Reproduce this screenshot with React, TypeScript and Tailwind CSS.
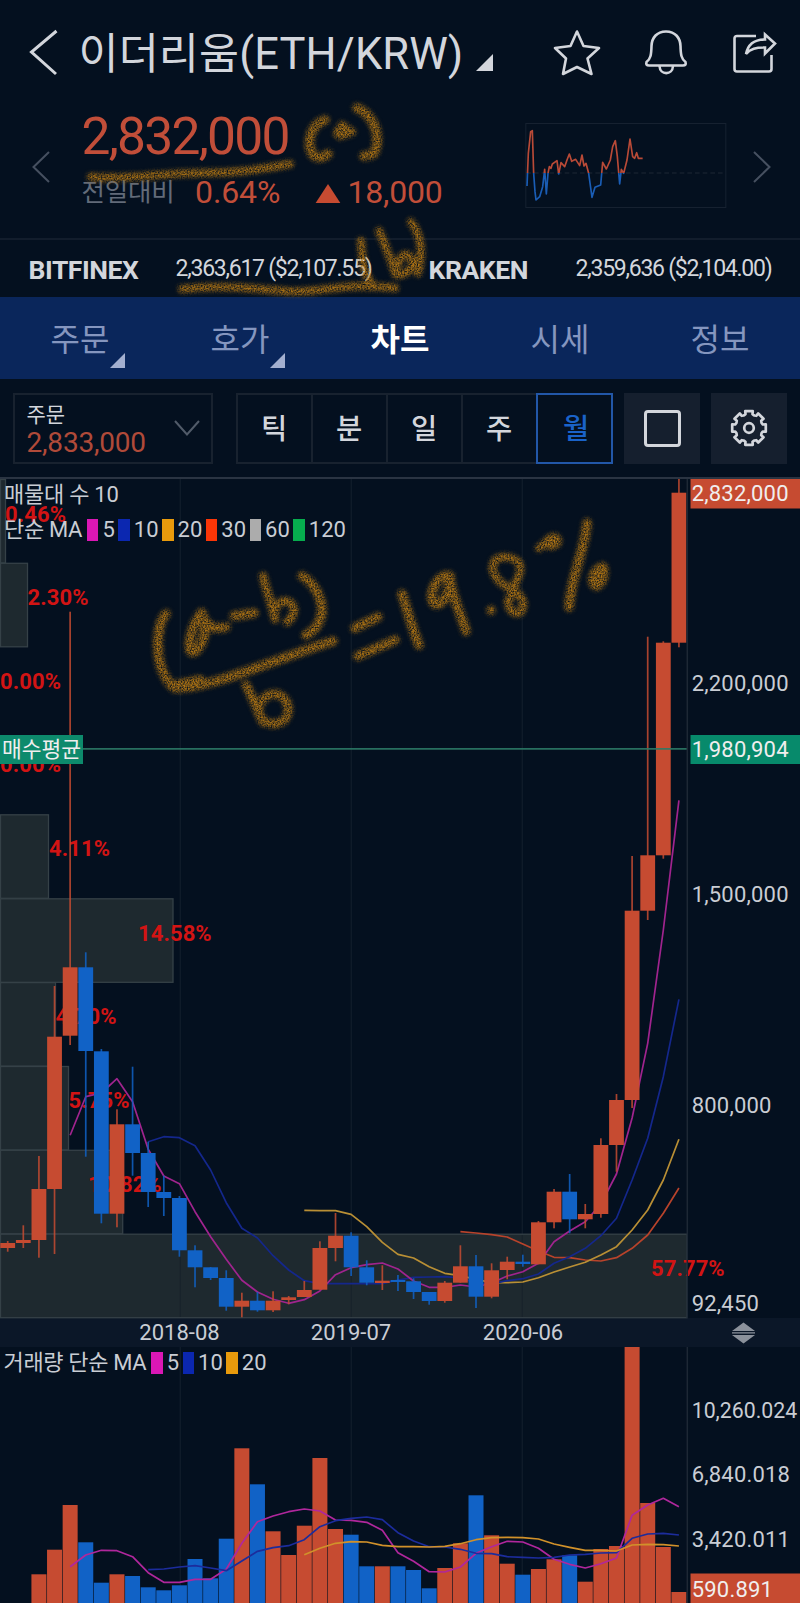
import React from "react";

const RED = "#c64b31";
const BLUE = "#1162c6";
const FONT = "font-['Roboto','Noto_Sans_CJK_KR',sans-serif]";

const cx = (i: number) => 7.7 + i * 15.61;

// [open/close top, open/close bottom, high, low, rising]
const CANDLES: [number, number, number, number, 0 | 1][] = [
  [1243, 1248, 1241, 1251.7, 1],
  [1240, 1243, 1225.3, 1248, 1],
  [1189, 1240, 1156, 1257.7, 1],
  [1036.7, 1189, 986, 1254, 1],
  [967.3, 1035.7, 611.7, 1045, 1],
  [967.3, 1051, 952.3, 1156.7, 0],
  [1051.3, 1213.7, 1049, 1223.3, 0],
  [1124.3, 1213.7, 1109.3, 1227.3, 1],
  [1124.3, 1153, 1066.7, 1175.7, 0],
  [1153, 1192, 1141.7, 1207, 0],
  [1192, 1198, 1175.7, 1216, 0],
  [1198, 1250.3, 1196, 1256.7, 0],
  [1250.3, 1267.3, 1245.3, 1287.3, 0],
  [1267.3, 1278, 1267, 1280, 0],
  [1278, 1306.7, 1270.3, 1310.7, 0],
  [1300.7, 1306.7, 1292.7, 1317.3, 1],
  [1300.7, 1310.3, 1292, 1311.7, 0],
  [1300.7, 1310.3, 1291.3, 1312, 1],
  [1297.3, 1300, 1296, 1304.3, 1],
  [1290, 1297, 1281, 1297, 1],
  [1248, 1289.7, 1241.3, 1289.7, 1],
  [1235.7, 1248, 1213, 1261.3, 1],
  [1235.7, 1267.3, 1232.3, 1276, 0],
  [1267.3, 1282.7, 1260.3, 1285.3, 0],
  [1280.7, 1283, 1265.3, 1290, 1],
  [1280, 1282, 1275, 1291, 0],
  [1281.3, 1292, 1278.3, 1299, 0],
  [1292, 1301, 1292, 1304.7, 0],
  [1282.7, 1301, 1281, 1302.7, 1],
  [1266.3, 1282.7, 1245.3, 1282.7, 1],
  [1266.3, 1296.7, 1255, 1308, 0],
  [1270.3, 1296.7, 1263.3, 1298.3, 1],
  [1261.7, 1270, 1256.7, 1279.3, 1],
  [1261.7, 1264, 1254.7, 1266.7, 0],
  [1222.3, 1264.3, 1221, 1264.3, 1],
  [1191.7, 1222.3, 1189, 1228.3, 1],
  [1191.7, 1219.3, 1174, 1233.3, 0],
  [1214, 1219.3, 1204, 1228.3, 1],
  [1145, 1214, 1138.3, 1217.7, 1],
  [1100, 1145, 1094, 1171.7, 1],
  [910.7, 1100, 856, 1108, 1],
  [855.3, 910.7, 636.7, 920, 1],
  [642.7, 855.3, 641.3, 858.7, 1],
  [492.7, 642.7, 479, 647.3, 1],
];

// Bar tops, starting with the third month
const VOLUMES = [
  1574.3, 1549.7, 1505, 1542.3, 1582.7, 1574.3, 1576, 1587.3, 1590.3, 1585.3, 1559, 1578.3, 1538.7, 1448.3, 1484.3,
  1531.3, 1555, 1525.7, 1458, 1529, 1534.7, 1566.3, 1566.3, 1566.3, 1570, 1588.3, 1568, 1543.3, 1495.3, 1535.3, 1563.7,
  1574.7, 1569, 1559.3, 1555.3, 1581.7, 1549, 1546, 1347, 1503, 1547, 1592,
];

type Series = { start: number; color: string; ys: number[] };

const PRICE_MA: Series[] = [
  {
    start: 29,
    color: "#b8432b",
    ys: [1231.7, 1233, 1234.7, 1237, 1244, 1251, 1257.3, 1257.7, 1260, 1261, 1257.7, 1248.3, 1235, 1213.3, 1188],
  },
  {
    start: 19,
    color: "#b98f35",
    ys: [
      1210.3, 1210.7, 1210.7, 1214.3, 1226.7, 1242.3, 1254.3, 1258, 1266.7, 1273.3, 1275.7, 1279.3, 1282.7, 1282.7, 1282,
      1277.7, 1272, 1267, 1262.3, 1255, 1246.7, 1230, 1210, 1180, 1139.3,
    ],
  },
  {
    start: 9,
    color: "#14278c",
    ys: [
      1141.7, 1136.7, 1137.7, 1145.7, 1170, 1202.7, 1228.3, 1238, 1255.7, 1270, 1280.7, 1283.7, 1283.5, 1283.7, 1283.7,
      1283.7, 1280, 1277.3, 1277, 1276.7, 1278, 1283, 1284, 1280.7, 1278.7, 1274, 1263.3, 1256.7, 1248.3, 1235.7, 1218.3,
      1180, 1138.3, 1076.7, 999.3,
    ],
  },
  {
    start: 4,
    color: "#a0248e",
    ys: [
      1135.3, 1096.7, 1093, 1078.7, 1101.7, 1149.3, 1176, 1183.7, 1211.7, 1236.7, 1259.3, 1280.3, 1292, 1299.3, 1303.3,
      1299.7, 1291, 1274.7, 1267.7, 1264.7, 1263, 1269, 1281, 1287.3, 1287.3, 1285, 1287, 1283, 1276, 1271.7, 1263.3,
      1241.7, 1231, 1221.7, 1204, 1174, 1118, 1043.3, 930, 800.3,
    ],
  },
];

const VOLUME_MA: Series[] = [
  {
    start: 4,
    color: "#b0279c",
    ys: [
      1566.7, 1555, 1550.3, 1550.7, 1556.7, 1572.7, 1582.3, 1582.3, 1579.3, 1579.3, 1569.3, 1543.3, 1521.7, 1516, 1511.7,
      1509, 1511, 1520, 1520.3, 1522.3, 1530.3, 1552.7, 1561.3, 1571.7, 1572, 1567, 1553.3, 1546.7, 1541.3, 1542, 1548.3,
      1559.3, 1564.3, 1568, 1563.7, 1558, 1515.3, 1505, 1498.3, 1506.7,
    ],
  },
  {
    start: 9,
    color: "#1c2c9c",
    ys: [
      1569.7, 1569, 1567, 1565.7, 1568, 1570.7, 1561, 1551.3, 1547.7, 1545.7, 1539.7, 1526.7, 1520.7, 1518.3, 1517,
      1519.7, 1532.7, 1541, 1546.7, 1547, 1549.3, 1553.3, 1553.7, 1556.7, 1557.3, 1558, 1557.3, 1555, 1554.3, 1553,
      1552.7, 1538.3, 1534, 1533.3, 1535,
    ],
  },
  {
    start: 19,
    color: "#d1912a",
    ys: [
      1554.7, 1548.3, 1543.3, 1541.7, 1542, 1545.3, 1546.7, 1546.7, 1547, 1546.3, 1543.7, 1539.7, 1537.7, 1537.3, 1537.7,
      1539, 1544, 1547.3, 1550.3, 1550.3, 1551, 1545, 1544.3, 1544.7, 1546,
    ],
  },
];

// Volume profile: [top, width, label, label x, label baseline]
const PROFILE: [number, number, string, number, number][] = [
  [479.5, 5, "0.46%", 5, 522],
  [563.3, 27, "2.30%", 27.5, 605],
  [647, 0, "0.00%", 0, 688.7],
  [731, 0, "0.00%", 0, 772.2],
  [814.8, 48, "4.11%", 49, 856],
  [898.8, 172.5, "14.58%", 138, 940.7],
  [982.6, 55, "4.70%", 55.500, 1024.2],
  [1066.5, 68, "5.75%", 68.5, 1108],
  [1150.3, 122.2, "10.82%", 88, 1191.5],
  [1234.2, 686.5, "57.77%", 651, 1276],
];

const points = (s: Series) => s.ys.map((y, k) => `${cx(s.start + k)},${y}`).join(" ");

function Lines({ series }: { series: Series[] }) {
  return (
    <>
      {series.map((s) => (
        <polyline key={s.start} points={points(s)} fill="none" stroke={s.color} strokeWidth="1.7" strokeLinejoin="round" />
      ))}
    </>
  );
}

const SPARK =
  "380,558 384,460 391,395 396,392 400,520 404,575 407,600 418,590 427,560 433,508 438,582 443,520 447,500 452,505 456,492 470,482 475,522 482,488 493,500 500,480 507,462 514,484 526,478 538,497 545,465 551,498 557,490 565,520 575,592 584,562 601,555 607,487 618,507 630,480 637,440 645,422 651,470 658,552 663,508 670,520 680,480 689,417 697,470 703,475 709,458 714,475 727,475";

function Sparkline() {
  return (
    <svg viewBox="375 369 604 255" className="h-[85px] w-[202px]">
      <defs>
        <clipPath id="above">
          <rect x="375" y="369" width="604" height="150" />
        </clipPath>
        <clipPath id="below">
          <rect x="375" y="519" width="604" height="110" />
        </clipPath>
      </defs>
      <rect x="376.5" y="370.5" width="600" height="252" fill="none" stroke="#162130" strokeWidth="3" />
      <line x1="378" x2="975" y1="519" y2="519" stroke="#1c2735" strokeWidth="3" strokeDasharray="14 9" />
      <polyline points={SPARK} fill="none" stroke="#b94a37" strokeWidth="5" strokeLinejoin="round" clipPath="url(#above)" />
      <polyline points={SPARK} fill="none" stroke="#1a5db5" strokeWidth="5" strokeLinejoin="round" clipPath="url(#below)" />
    </svg>
  );
}

function Header() {
  return (
    <header className="flex h-[104px] items-start text-[#d3d6dc]">
      <svg viewBox="0 0 30 48" className="mt-[28px] ml-[28.500px] h-12 w-[30px] shrink-0" fill="none" stroke="currentColor" strokeWidth="3">
        <path d="M27.500 3L2.500 24L27 46" />
      </svg>
      <h1 className="mt-[25px] ml-[20px] w-[386.500px] shrink-0 text-[43.500px] leading-[60px] tracking-[0.150px] whitespace-nowrap">이더리움(ETH/KRW)</h1>
      <svg viewBox="0 0 18 18" className="mt-[54px] ml-[11px] h-[17px] w-[17px] shrink-0" fill="currentColor">
        <path d="M18 0V18H0Z" />
      </svg>
      <svg viewBox="0 0 48 48" className="mt-[29px] ml-[59.500px] h-12 w-12 shrink-0" fill="none" stroke="currentColor" strokeWidth="2.600" strokeLinejoin="round">
        <path d="M24 2.500L30.500 17L46 19L34.500 29.500L38.500 45L24 38L10 45L13 29.500L2 19L17.500 17Z" />
      </svg>
      <svg viewBox="0 0 44 48" className="mt-[29px] ml-[43px] h-12 w-11 shrink-0" fill="none" stroke="currentColor" strokeWidth="2.600" strokeLinejoin="round">
        <path d="M22 2.500C12.500 2.500 7.800 9 7.500 17C7.300 26 6.500 30 2.500 33Q1.500 36.500 5 36.500H39Q42.500 36.500 41.500 33C37.500 30 36.700 26 36.500 17C36.200 9 31.500 2.500 22 2.500Z" />
        <path d="M15.500 37C16 46.500 28.500 46.500 29 37" />
      </svg>
      <svg viewBox="0 0 46 46" className="mt-[29px] ml-[44px] h-[46px] w-[46px] shrink-0" fill="none" stroke="currentColor" strokeWidth="2.600" strokeLinejoin="miter">
        <path d="M24 7H5Q2.500 7 2.500 9.500V40Q2.500 42.500 5 42.500H37Q39.500 42.500 39.500 40V26" />
        <path d="M14 25C16 15 22 10.500 33 10.500V5.500L43 14.500L33 24.500V18.500C24 18.500 18.500 19.500 14 25Z" />
      </svg>
    </header>
  );
}

function Quote() {
  return (
    <section className="flex h-[134px] items-start">
      <svg viewBox="0 0 18 32" className="mt-[47px] ml-[32px] h-8 w-[18px] shrink-0" fill="none" stroke="#465060" strokeWidth="2">
        <path d="M17 1L1.500 16L17 31" />
      </svg>
      <div className="ml-[31.500px] w-[443.500px] shrink-0">
        <div className="mt-[5px] text-[51.500px] leading-[56px] tracking-[-1.750px] text-[#c14e39]">2,832,000</div>
        <div className="mt-[8px] flex h-[38px] items-center leading-[38px]">
          <span className="w-[113.500px] text-[25.500px] tracking-[-0.200px] text-[#626b79]">전일대비</span>
          <span className="w-[119.500px] text-[32px] tracking-[-0.100px] text-[#c14e39]">0.64%</span>
          <svg viewBox="0 0 26 20" className="mt-[2px] h-[19px] w-[26px]" fill={RED}>
            <path d="M13 0L26 20H0Z" />
          </svg>
          <span className="ml-[7px] text-[32px] tracking-[-0.200px] text-[#c14e39]">18,000</span>
        </div>
      </div>
      <div className="mt-[19px]">
        <Sparkline />
      </div>
      <svg viewBox="0 0 18 32" className="mt-[47px] ml-[26px] h-8 w-[18px] shrink-0" fill="none" stroke="#465060" strokeWidth="2">
        <path d="M1 1L16.500 16L1 31" />
      </svg>
    </section>
  );
}

function Exchanges() {
  return (
    <section className="flex h-[59px] items-center border-t-2 border-[#121d2c] pt-[2px] text-[#d3d6dc]">
      <b className="ml-[28.500px] w-[147px] text-[26.500px] tracking-[-0.450px]">BITFINEX</b>
      <span className="w-[253px] text-[23px] tracking-[-1.250px]">2,363,617 ($2,107.55)</span>
      <b className="w-[147px] text-[26.500px] tracking-[-0.450px]">KRAKEN</b>
      <span className="text-[23px] tracking-[-1.250px]">2,359,636 ($2,104.00)</span>
    </section>
  );
}

const TABS = [
  { label: "주문", more: true },
  { label: "호가", more: true },
  { label: "차트", active: true },
  { label: "시세" },
  { label: "정보" },
];

function Tabs() {
  return (
    <nav className="grid h-[82px] grid-cols-5 bg-[#0a265b]">
      {TABS.map((t) => (
        <div key={t.label} className="relative flex items-center justify-center pt-[3px]">
          <span className={t.active ? "text-[32px] font-bold text-white" : "text-[32px] text-[#8596bf]"}>{t.label}</span>
          {t.more && (
            <svg viewBox="0 0 16 16" className="absolute right-[35px] bottom-[11px] h-[15px] w-[15px]" fill="#a3afd0">
              <path d="M16 0V16H0Z" />
            </svg>
          )}
        </div>
      ))}
    </nav>
  );
}

function gearPath() {
  const pts: string[] = [];
  for (let k = 0; k < 8; k++) {
    const a = (k * Math.PI) / 4 - Math.PI / 2;
    const steps: [number, number][] = [
      [-0.38, 13.6],
      [-0.25, 14.2],
      [-0.22, 17.2],
      [0.22, 17.2],
      [0.25, 14.2],
      [0.38, 13.6],
    ];
    for (const [d, r] of steps) pts.push(`${(20 + r * Math.cos(a + d)).toFixed(2)} ${(20 + r * Math.sin(a + d)).toFixed(2)}`);
  }
  return `M${pts.join("L")}Z`;
}

function Toolbar() {
  return (
    <section className="flex h-[98px] pt-[13.500px] pl-[13px] text-[#d3d6dc]">
      <div className="flex h-[71px] w-[200px] items-center justify-between border-2 border-[#18222f] pr-[11px] pl-[11.500px]">
        <div>
          <div className="mt-[4px] text-[21px] leading-[25px]">주문</div>
          <div className="text-[28px] leading-[30px] tracking-[-0.2px] text-[#b04a39]">2,833,000</div>
        </div>
        <svg viewBox="0 0 26 16" className="h-4 w-[26px]" fill="none" stroke="#515b69" strokeWidth="2">
          <path d="M1 1L13 14.500L25 1" />
        </svg>
      </div>
      <div className="ml-[22.500px] flex h-[71px] w-[377px] border-2 border-r-0 border-[#18222f] text-[28.500px] font-medium">
        {["틱", "분", "일", "주"].map((p, i) => (
          <div key={p} className={i < 3 ? "flex w-[75px] items-center justify-center border-r-2 border-[#18222f] pt-[4px]" : "flex w-[73px] items-center justify-center pt-[4px]"}>
            {p}
          </div>
        ))}
        <div className="-my-[2px] flex w-[77px] items-center justify-center border-2 border-[#2257a8] pt-[4px] pl-[4px] text-[#1a63c9]">월</div>
      </div>
      <div className="ml-[11.500px] flex h-[71px] w-[76px] items-center justify-center bg-[#151f2e]">
        <div className="h-[37px] w-[37px] rounded-[4px] border-3 border-[#d3d6dc]" />
      </div>
      <div className="ml-[11px] flex h-[71px] w-[76px] items-center justify-center bg-[#151f2e]">
        <svg viewBox="0 0 40 40" className="h-10 w-10" fill="none" stroke="currentColor" strokeWidth="2.700" strokeLinejoin="round">
          <path d={gearPath()} />
          <circle cx="20" cy="20" r="4.800" />
        </svg>
      </div>
    </section>
  );
}

function Legend({ title, items }: { title: string; items: [string, string][] }) {
  return (
    <div className="flex h-[24px] items-center text-[22px] leading-[24px] text-[#c9cdd4]">
      <span className="mr-[5px] tracking-[-0.350px] whitespace-nowrap">{title}</span>
      {items.map(([label, color]) => (
        <span key={label} className="flex items-center">
          <i className="mr-[4px] block h-[22.500px] w-[11.500px]" style={{ background: color }} />
          <span className="mr-[3.500px]">{label}</span>
        </span>
      ))}
    </div>
  );
}

const AXIS: [string, number][] = [
  ["2,200,000", 691],
  ["1,500,000", 901.7],
  ["800,000", 1112.7],
  ["92,450", 1311],
  ["6,840.018", 1482.3],
  ["3,420.011", 1546.7],
];

function Chart() {
  return (
    <section className="relative h-[1126px] overflow-hidden">
      <svg viewBox="0 477 800 1126" className={`block h-[1126px] w-[800px] text-[22px] ${FONT}`}>
        <rect x="0" y="1318" width="800" height="29" fill="#0b1728" />
        {[180.3, 351.3, 522.3].map((x) => (
          <g key={x} stroke="#0f1b29" strokeWidth="1.500">
            <line x1={x} x2={x} y1="478" y2="1318" />
            <line x1={x} x2={x} y1="1347" y2="1603" />
          </g>
        ))}
        {PROFILE.filter((p) => p[1] > 0).map(([y, w]) => (
          <rect key={y} x="0.500" y={y} width={w} height="83.500" fill="#1e292f" stroke="#354147" strokeWidth="1.300" />
        ))}
        <line x1="180.300" x2="180.300" y1="1235" y2="1317" stroke="#17222b" />
        <line x1="351.300" x2="351.300" y1="1235" y2="1317" stroke="#17222b" />
        <line x1="522.300" x2="522.300" y1="1235" y2="1317" stroke="#17222b" />
        <g fill="#d21414" fontWeight="700" letterSpacing="0.100">
          {PROFILE.map(([, , label, x, y]) => (
            <text key={y} x={x} y={y}>
              {label}
            </text>
          ))}
        </g>
        <Lines series={PRICE_MA} />
        {CANDLES.map(([top, bottom, high, low, up], i) => (
          <g key={i} fill={up ? RED : BLUE}>
            <rect x={cx(i) - 0.85} y={high} width="1.700" height={low - high} opacity="0.85" />
            <rect x={cx(i) - 7.4} y={top} width="14.800" height={bottom - top} />
          </g>
        ))}
        <line x1="83" x2="687" y1="748.800" y2="748.800" stroke="#2c7a66" strokeWidth="1.800" opacity="0.9" />

        {VOLUMES.map((y, k) => (
          <rect key={k} x={cx(k + 2) - 7.5} y={y} width="15" height={1603 - y} fill={CANDLES[k + 2][4] ? RED : BLUE} />
        ))}
        <Lines series={VOLUME_MA} />

        <rect x="0" y="477" width="800" height="2" fill="#2a3442" />
        <line x1="687.300" x2="687.300" y1="479" y2="1318" stroke="#1d2835" strokeWidth="1.500" />
        <line x1="687.300" x2="687.300" y1="1347" y2="1603" stroke="#1d2835" strokeWidth="1.500" />

        <rect x="690.500" y="479" width="110" height="29.500" fill={RED} />
        <rect x="690.500" y="735" width="110" height="29" fill="#078a6b" />
        <rect x="690.500" y="1573.500" width="110" height="30" fill={RED} />
        <rect x="0" y="735" width="83" height="29" fill="#0d8a6c" />
        <g fill="#c9cdd4">
          {AXIS.map(([label, y]) => (
            <text key={label} x="691.700" y={y} letterSpacing="0.200">
              {label}
            </text>
          ))}
          <text x="691.700" y="1418.300" textLength="105.500" lengthAdjust="spacingAndGlyphs">
            10,260.024
          </text>
          <g textAnchor="middle">
            <text x="179.500" y="1340">2018-08</text>
            <text x="351" y="1340">2019-07</text>
            <text x="523" y="1340">2020-06</text>
          </g>
        </g>
        <g fill="#f0eeee" letterSpacing="0.200">
          <text x="691.700" y="501.300">2,832,000</text>
          <text x="691.700" y="757.200">1,980,904</text>
          <text x="691.700" y="1596.500">590.891</text>
          <text x="2" y="757" fontSize="21.500" letterSpacing="0">매수평균</text>
        </g>
        <g fill="#8b919b">
          <path d="M743.500 1322.500L755 1331H732ZM732 1332.200H755V1333.400H732ZM732 1335H755L743.500 1343.500Z" />
        </g>
      </svg>
      <div className="absolute top-[5px] left-[4px]">
        <div className="text-[22px] leading-[26px] tracking-[-0.250px] text-[#c9cdd4]">매물대 수 10</div>
      </div>
      <div className="absolute top-[41px] left-[4px]">
        <Legend
          title="단순 MA"
          items={[
            ["5", "#da17b5"],
            ["10", "#0b27b0"],
            ["20", "#e89a0c"],
            ["30", "#fb3607"],
            ["60", "#acacac"],
            ["120", "#06ad4e"],
          ]}
        />
      </div>
      <div className="absolute top-[874px] left-[3.500px]">
        <Legend
          title="거래량 단순 MA"
          items={[
            ["5", "#da17b5"],
            ["10", "#0b27b0"],
            ["20", "#e89a0c"],
          ]}
        />
      </div>
    </section>
  );
}

function Handwriting() {
  return (
    <svg viewBox="0 0 800 800" className="pointer-events-none absolute top-0 left-0 h-[800px] w-[800px]">
      <defs>
        <filter id="crayon" x="0" y="0" width="800" height="800" filterUnits="userSpaceOnUse" colorInterpolationFilters="sRGB">
          <feGaussianBlur in="SourceGraphic" stdDeviation="1.900" result="soft" />
          <feTurbulence type="fractalNoise" baseFrequency="0.700" numOctaves="2" seed="4" />
          <feColorMatrix values="0 0 0 0 0  0 0 0 0 0  0 0 0 0 0  2 0 0 0 -0.350" result="grain" />
          <feComposite in="soft" in2="grain" operator="in" />
          <feGaussianBlur stdDeviation="0.450" />
        </filter>
      </defs>
      <g filter="url(#crayon)" fill="none" stroke="#ae7313" strokeWidth="9.500" strokeLinecap="round" strokeLinejoin="round">
        <g strokeWidth="8">
          <path d="M91 177C130 180 160 173 200 173S260 169 290 164" />
          <path d="M325 120C312 124 308 138 310 148S320 160 328 154" strokeWidth="9.500" />
          <path d="M337 133L342 125L352 132L340 136Z" fill="#ae7313" />
          <path d="M357 108C372 114 378 130 377 142S374 155 364 156" strokeWidth="9.500" />
          <path d="M182 289C220 285 250 288 285 291S335 282 395 288" />
          <path d="M361 241C362 260 364 276 373 285" />
          <path d="M379 231C386 246 390 258 396 275C398 256 405 250 411 258S404 277 398 274" />
          <path d="M411 222C421 234 423 252 418 273" />
        </g>
        <path d="M166 614C156 624 155 660 165 676Q170 686 175 688C210 689 270 661 333 641M176 685L200 680" />
        <path d="M202 613C192 622 186 650 192 652S212 632 201 613M205 620Q210 631 226 627" />
        <path d="M234 616L254 613" />
        <path d="M263 576C266 590 272 604 275 619M275 610C280 596 294 600 294 611Q292 619 287 622" strokeWidth="8.500" />
        <path d="M302 576C316 584 326 604 320 620Q316 630 306 635" />
        <path d="M355 628L378 617M358 656L395 640" />
        <path d="M246 685C254 700 258 712 263 722M259 706C266 689 284 691 288 706C291 723 272 728 263 720" strokeWidth="9" />
        <path d="M402 594C408 612 414 634 419 645" />
        <path d="M450 576C438 572 428 594 433 602S452 596 449 576C452 596 460 612 466 631" />
        <path d="M491 610V610.500" strokeWidth="9" />
        <path d="M513 589C496 584 490 570 494 562S518 556 520 566S514 582 513 590C520 594 526 602 522 610S507 610 508 601L513 590" strokeWidth="8" />
        <path d="M549 540L539 548" strokeWidth="8" />
        <path d="M551 542L554 541" strokeWidth="16" />
        <path d="M587 523C585 550 570 580 569 607" />
        <path d="M603 567C596 568 590 578 594 584S606 578 603 567" />
      </g>
    </svg>
  );
}

export default function App() {
  return (
    <main className={`relative h-[1603px] w-[800px] overflow-hidden bg-[#04101f] ${FONT}`}>
      <Header />
      <Quote />
      <Exchanges />
      <Tabs />
      <Toolbar />
      <Chart />
      <Handwriting />
    </main>
  );
}
